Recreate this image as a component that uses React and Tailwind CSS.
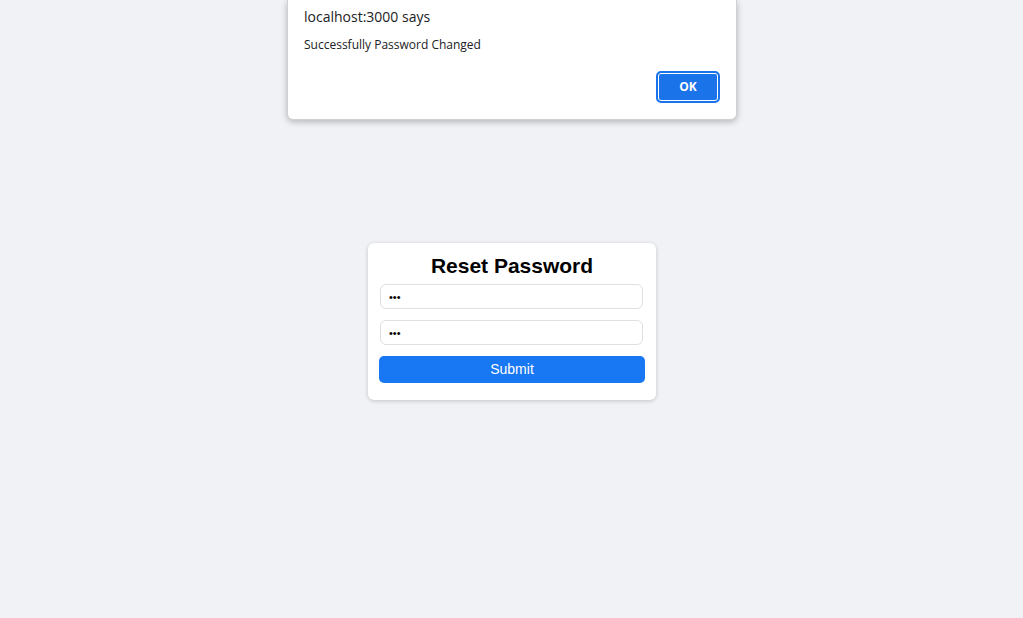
import React from 'react';

const AlertDialog = () => (
    <div className="absolute top-0 left-[287px] w-[450px] h-[120px] bg-white rounded-b-[6px] border border-t-0 border-[#d0d0d0] shadow-[0_2px_6px_rgba(0,0,0,0.25)] font-['Open_Sans',sans-serif] text-[#202124]">
        <div className="pl-[16px] pt-[7px]">
            <p className="text-[14px] leading-[20px]">localhost:3000 says</p>
            <p className="text-[12px] leading-[16px] mt-[10px]">Successfully Password Changed</p>
        </div>
        <div className="flex justify-end pr-[16px] mt-[18px]">
            <button className="w-[64px] h-[32px] rounded-[5px] bg-[#1a73e8] border-2 border-[#1a73e8] shadow-[inset_0_0_0_1px_#ffffff] text-white text-[12px] font-bold">
                OK
            </button>
        </div>
    </div>
);

const App = () => {
    return (
        <div className="relative min-h-screen bg-[#f0f2f5] font-['Liberation_Sans',Arial,sans-serif]">
            <div className="flex justify-center pt-[243px]">
                <div className="w-[288px] ml-px bg-white rounded-[6px] shadow-[0_1px_4px_rgba(0,0,0,0.2)] px-[11px] pt-[10px] pb-[17px]">
                    <h1 className="text-center text-[21px] leading-[25px] font-bold text-black">Reset Password</h1>
                    <form className="flex flex-col mt-[6px]" onSubmit={(e) => e.preventDefault()}>
                        <input
                            type="password"
                            defaultValue="abc"
                            className="ml-px w-[263px] h-[25px] px-[8px] text-[11px] border border-[#dddfe2] rounded-[6px] bg-white outline-none"
                        />
                        <input
                            type="password"
                            defaultValue="abc"
                            className="ml-px mt-[11px] w-[263px] h-[25px] px-[8px] text-[11px] border border-[#dddfe2] rounded-[6px] bg-white outline-none"
                        />
                        <button
                            type="submit"
                            className="mt-[11px] w-full h-[27px] bg-[#1877f2] text-white text-[14px] rounded-[5px]"
                        >
                            Submit
                        </button>
                    </form>
                </div>
            </div>
            <AlertDialog />
        </div>
    );
};

export default App;
